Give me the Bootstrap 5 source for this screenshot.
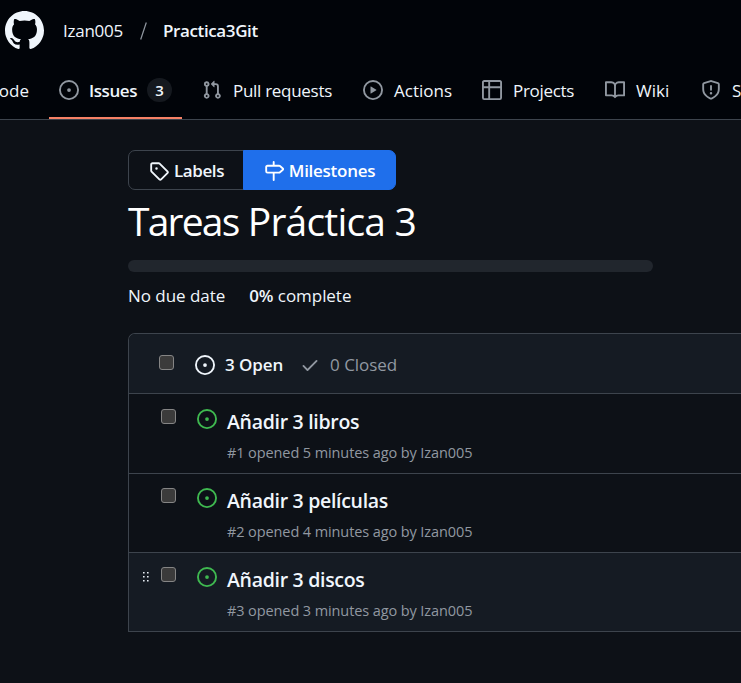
<!DOCTYPE html>
<html lang="es" data-bs-theme="dark">
<head>
<meta charset="utf-8">
<meta name="viewport" content="width=device-width, initial-scale=1">
<title>Tareas Práctica 3</title>
<link href="https://cdn.jsdelivr.net/npm/bootstrap@5.3.0/dist/css/bootstrap.min.css" rel="stylesheet">
<style>
body{font-family:"Open Sans","Noto Sans",sans-serif;font-size:17px;line-height:24px;background:#0d1117;color:#f0f6fc;overflow:hidden;height:683px}
svg{display:block;fill:currentColor;flex:none}
.w6{font-weight:600}
.muted{color:#9198a1}
.top{background:#010409;border-bottom:1px solid #3d444d;height:120px}
.crumbs{height:61px;padding-left:5px}
.owner{margin-left:19px;width:60px;letter-spacing:-.25px}
.repo{letter-spacing:-.38px}
.slash{margin:0 16px 0 17px}
.tabs{height:58px;gap:10px}
.tab{height:58px;padding:2px 10px 0;gap:11px;color:#f0f6fc;white-space:nowrap;flex:none}
.tab svg{color:#9198a1;margin-top:-2px}
.code{width:39px;overflow:hidden}
.issues{width:133px;border-bottom:2px solid #f78166;padding-top:4px;gap:10px}
.issues .w6{letter-spacing:-.42px}
.pulls{width:151px;letter-spacing:-.29px}
.projects{width:113px;letter-spacing:-.3px}
.actions{width:109px}
.wiki{width:86px}
.issues .count{letter-spacing:0;width:26px;height:24px;border-radius:12px;background:#15191f;font-size:15px;line-height:24px;margin-top:-2px}
.content{padding:30px 0 0 128px}
.switch{width:268px;height:40px}
.switch .btn{border-radius:7px;padding:1px 0 0;gap:5px;font-size:17px;border:1px solid #3d444d;color:#f0f6fc;letter-spacing:-.4px}
.switch .btn.l{flex:0 0 116px;padding-left:1px}
.switch .btn.m{background:#1f6feb;border-color:#1f6feb;letter-spacing:-.27px;color:#fff}
h1.name{font-size:39px;line-height:50px;font-weight:400;margin:6px 0 0;letter-spacing:-.8px}
.name span{letter-spacing:-1.8px}
.bar{width:525px;height:12px;border-radius:6px;background:#21262d;margin-top:14px}
.stats{margin-top:12px;gap:24px;letter-spacing:-.05px}
.box{margin-top:25px;border:1px solid #3d444d;border-right:0;border-radius:7px 0 0 0;width:613px}
.head{height:60px;background:#151b23;border-radius:6px 0 0 0;border-bottom:1px solid #3d444d;padding:3px 0 0 30px}
.head .chk{margin:-6px 21px 0 0}
.opened{margin:0 17px 0 10px;letter-spacing:-.1px}
.closed{margin-left:10px;letter-spacing:-.05px}
.chk{width:15px;height:15px;border:1px solid #858585;border-radius:3px;background:#3b3b3b;flex:none}
.item{height:79px}
.item+.item{border-top:1px solid #3d444d}
.hov{background:#151b23}
.grip{width:32px;padding:20px 0 0 14px;color:#e6edf3}
.item .chk{margin-top:15px}
.open{color:#3fb950;margin:15px 10px 0 21px}
.txt{padding-top:15px}
.item+.item .chk,.item+.item .open{margin-top:14px}
.item+.item .txt{padding-top:14px}
.item+.item .grip{padding-top:19px}
.ttl{font-size:19.5px;line-height:26px;letter-spacing:-.3px}
.meta{font-size:14.5px;line-height:20px;margin-top:8px;letter-spacing:-.1px}
</style>
</head>
<body>
<svg class="d-none"><symbol id="issue" viewBox="0 0 16 16"><path d="M8 9.5a1.5 1.5 0 1 0 0-3 1.5 1.5 0 0 0 0 3Z"/><path d="M8 0a8 8 0 1 1 0 16A8 8 0 0 1 8 0ZM1.5 8a6.5 6.5 0 1 0 13 0 6.5 6.5 0 0 0-13 0Z"/></symbol></svg>
<header class="top overflow-hidden">
<div class="crumbs d-flex align-items-center">
<svg width="39" height="39" viewBox="0 0 16 16"><path d="M8 0c4.42 0 8 3.58 8 8a8.013 8.013 0 0 1-5.45 7.59c-.4.08-.55-.17-.55-.38 0-.27.01-1.13.01-2.2 0-.75-.25-1.23-.54-1.48 1.78-.2 3.65-.88 3.65-3.95 0-.88-.31-1.59-.82-2.15.08-.2.36-1.02-.08-2.12 0 0-.67-.22-2.2.82-.64-.18-1.32-.27-2-.27-.68 0-1.36.09-2 .27-1.53-1.03-2.2-.82-2.2-.82-.44 1.1-.16 1.92-.08 2.12-.51.56-.82 1.28-.82 2.15 0 3.06 1.86 3.75 3.64 3.95-.23.2-.44.55-.51 1.07-.46.21-1.61.55-2.33-.66-.15-.24-.6-.83-1.23-.82-.67.01-.27.38.01.53.34.19.73.9.82 1.13.16.45.68 1.31 2.69.94 0 .67.01 1.3.01 1.49 0 .21-.15.45-.55.38A7.995 7.995 0 0 1 0 8c0-4.42 3.58-8 8-8Z"/></svg>
<span class="owner">Izan005</span>
<svg class="slash muted" width="7" height="18" viewBox="0 0 7 18"><path d="M.7 17.5 6.3 .5" stroke="currentColor" stroke-width="1.2"/></svg>
<span class="w6 repo">Practica3Git</span>
</div>
<nav class="tabs d-flex">
<div class="tab code d-flex align-items-center justify-content-end"><span>Code</span></div>
<div class="tab issues d-flex align-items-center"><svg width="20" height="20"><use href="#issue"/></svg><span class="w6">Issues</span><span class="count w6 text-center">3</span></div>
<div class="tab pulls d-flex align-items-center"><svg width="20" height="20" viewBox="0 0 16 16"><path d="M1.5 3.25a2.25 2.25 0 1 1 3 2.122v5.256a2.251 2.251 0 1 1-1.5 0V5.372A2.25 2.25 0 0 1 1.5 3.25Zm5.677-.177L9.573.677A.25.25 0 0 1 10 .854V2.5h1A2.5 2.5 0 0 1 13.5 5v5.628a2.251 2.251 0 1 1-1.5 0V5a1 1 0 0 0-1-1h-1v1.646a.25.25 0 0 1-.427.177L7.177 3.427a.25.25 0 0 1 0-.354ZM3.75 2.5a.75.75 0 1 0 0 1.5.75.75 0 0 0 0-1.5Zm0 9.5a.75.75 0 1 0 0 1.5.75.75 0 0 0 0-1.5Zm8.25.75a.75.75 0 1 0 1.5 0 .75.75 0 0 0-1.5 0Z"/></svg><span>Pull requests</span></div>
<div class="tab actions d-flex align-items-center"><svg width="20" height="20" viewBox="0 0 16 16"><path d="M8 0a8 8 0 1 1 0 16A8 8 0 0 1 8 0ZM1.5 8a6.5 6.5 0 1 0 13 0 6.5 6.5 0 0 0-13 0Zm4.879-2.773 4.264 2.559a.25.25 0 0 1 0 .428l-4.264 2.559A.25.25 0 0 1 6 10.559V5.442a.25.25 0 0 1 .379-.215Z"/></svg><span>Actions</span></div>
<div class="tab projects d-flex align-items-center"><svg width="20" height="20" viewBox="0 0 16 16"><path d="M0 1.75C0 .784.784 0 1.75 0h12.5C15.216 0 16 .784 16 1.75v12.5A1.75 1.75 0 0 1 14.25 16H1.75A1.75 1.75 0 0 1 0 14.25ZM6.5 6.5v8h7.75a.25.25 0 0 0 .25-.25V6.5Zm8-1.5V1.75a.25.25 0 0 0-.25-.25H6.5V5Zm-13 1.5v7.75c0 .138.112.25.25.25H5v-8ZM5 5V1.5H1.75a.25.25 0 0 0-.25.25V5Z"/></svg><span>Projects</span></div>
<div class="tab wiki d-flex align-items-center"><svg width="20" height="20" viewBox="0 0 16 16"><path d="M0 1.75A.75.75 0 0 1 .75 1h4.253c1.227 0 2.317.59 3 1.501A3.743 3.743 0 0 1 11.006 1h4.245a.75.75 0 0 1 .75.75v10.5a.75.75 0 0 1-.75.75h-4.507a2.25 2.25 0 0 0-1.591.659l-.622.621a.75.75 0 0 1-1.06 0l-.622-.621A2.25 2.25 0 0 0 5.258 13H.75a.75.75 0 0 1-.75-.75Zm7.251 10.324.004-5.073-.002-2.253A2.25 2.25 0 0 0 5.003 2.5H1.5v9h3.757a3.75 3.75 0 0 1 1.994.574ZM8.755 4.75l-.004 7.322a3.752 3.752 0 0 1 1.992-.572H14.5v-9h-3.495a2.25 2.25 0 0 0-2.25 2.25Z"/></svg><span>Wiki</span></div>
<div class="tab d-flex align-items-center"><svg width="20" height="20" viewBox="0 0 16 16"><path d="M7.467.133a1.748 1.748 0 0 1 1.066 0l5.25 1.68A1.75 1.75 0 0 1 15 3.48V7c0 1.566-.32 3.182-1.303 4.682-.983 1.498-2.585 2.813-5.032 3.855a1.697 1.697 0 0 1-1.33 0c-2.447-1.042-4.049-2.357-5.032-3.855C1.32 10.182 1 8.566 1 7V3.48a1.75 1.75 0 0 1 1.217-1.667Zm.61 1.429a.25.25 0 0 0-.153 0l-5.25 1.68a.25.25 0 0 0-.174.238V7c0 1.358.275 2.666 1.057 3.86.784 1.194 2.121 2.34 4.366 3.297a.196.196 0 0 0 .154 0c2.245-.956 3.582-2.104 4.366-3.298C13.225 9.666 13.5 8.36 13.5 7V3.48a.251.251 0 0 0-.174-.237l-5.25-1.68ZM8.75 4.75v3a.75.75 0 0 1-1.5 0v-3a.75.75 0 0 1 1.5 0ZM9 10.5a1 1 0 1 1-2 0 1 1 0 0 1 2 0Z"/></svg><span>Security</span></div>
</nav>
</header>
<main class="content">
<div class="switch btn-group d-flex">
<a class="btn l w6 d-flex align-items-center justify-content-center"><svg width="20" height="20" viewBox="0 0 16 16"><path d="M1 7.775V2.75C1 1.784 1.784 1 2.75 1h5.025c.464 0 .91.184 1.238.513l6.25 6.25a1.75 1.75 0 0 1 0 2.474l-5.026 5.026a1.75 1.75 0 0 1-2.474 0l-6.25-6.25A1.752 1.752 0 0 1 1 7.775Zm1.5 0c0 .066.026.13.073.177l6.25 6.25a.25.25 0 0 0 .354 0l5.025-5.025a.25.25 0 0 0 0-.354l-6.25-6.25a.25.25 0 0 0-.177-.073H2.75a.25.25 0 0 0-.25.25ZM6 5a1 1 0 1 1 0 2 1 1 0 0 1 0-2Z"/></svg><span>Labels</span></a>
<a class="btn m w6 d-flex align-items-center justify-content-center"><svg width="20" height="20" viewBox="0 0 16 16"><path d="M7.75 0a.75.75 0 0 1 .75.75V3h3.634c.414 0 .814.147 1.13.414l2.07 1.75a1.75 1.75 0 0 1 0 2.672l-2.07 1.75a1.75 1.75 0 0 1-1.13.414H8.5v5.25a.75.75 0 0 1-1.5 0V10H2.75A1.75 1.75 0 0 1 1 8.25v-3.5C1 3.784 1.784 3 2.75 3H7V.75A.75.75 0 0 1 7.75 0Zm4.384 8.5a.25.25 0 0 0 .161-.06l2.07-1.75a.248.248 0 0 0 0-.38l-2.07-1.75a.25.25 0 0 0-.161-.06H2.75a.25.25 0 0 0-.25.25v3.5c0 .138.112.25.25.25h9.384Z"/></svg><span>Milestones</span></a>
</div>
<h1 class="name"><span>Tareas</span> Práctica 3</h1>
<div class="bar"></div>
<div class="stats d-flex"><span>No due date</span><span><span class="w6">0%</span> complete</span></div>
<section class="box">
<div class="head d-flex align-items-center"><i class="chk"></i><svg width="20" height="20"><use href="#issue"/></svg><span class="w6 opened">3 Open</span><svg class="muted" width="20" height="20" viewBox="0 0 16 16"><path d="M13.78 4.22a.75.75 0 0 1 0 1.06l-7.25 7.25a.75.75 0 0 1-1.06 0L2.22 9.28a.751.751 0 0 1 .018-1.042.751.751 0 0 1 1.042-.018L6 10.94l6.72-6.72a.75.75 0 0 1 1.06 0Z"/></svg><span class="muted closed">0 Closed</span></div>
<div class="item d-flex"><div class="grip"></div><i class="chk"></i><svg class="open" width="20" height="20"><use href="#issue"/></svg><div class="txt"><div class="ttl w6">Añadir 3 libros</div><div class="meta muted">#1 opened 5 minutes ago by Izan005</div></div></div>
<div class="item d-flex"><div class="grip"></div><i class="chk"></i><svg class="open" width="20" height="20"><use href="#issue"/></svg><div class="txt"><div class="ttl w6">Añadir 3 películas</div><div class="meta muted">#2 opened 4 minutes ago by Izan005</div></div></div>
<div class="item hov d-flex"><div class="grip"><svg width="8" height="10" viewBox="0 0 8 10"><path d="M0 0h1.6v1.6H0zM4 0h1.6v1.6H4zM0 4h1.6v1.6H0zM4 4h1.6v1.6H4zM0 8h1.6v1.6H0zM4 8h1.6v1.6H4z"/></svg></div><i class="chk"></i><svg class="open" width="20" height="20"><use href="#issue"/></svg><div class="txt"><div class="ttl w6">Añadir 3 discos</div><div class="meta muted">#3 opened 3 minutes ago by Izan005</div></div></div>
</section>
</main>
<script src="https://cdn.jsdelivr.net/npm/bootstrap@5.3.0/dist/js/bootstrap.bundle.min.js"></script>
</body>
</html>
